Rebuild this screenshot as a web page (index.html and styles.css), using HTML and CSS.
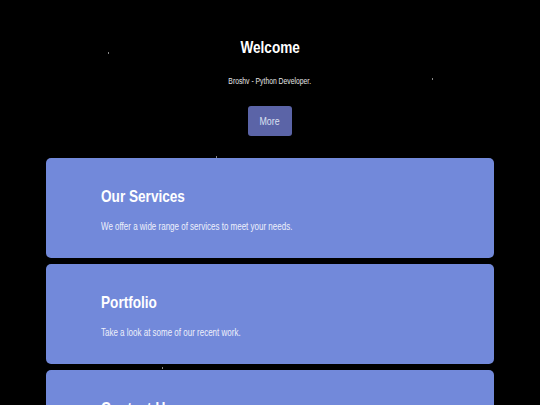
FILE: index.html
```html
<!DOCTYPE html>
<html lang="en">
<head>
	<meta charset="utf-8" />
	<title>Broshv</title>
	<meta name="viewport" content="width=device-width,initial-scale=1.0">
	<link rel="stylesheet" href="styles.css">
</head>

<body>
<span class="star" style="left:108px;top:52px"></span>
<span class="star" style="left:432px;top:78px"></span>
<span class="star" style="left:216px;top:156px"></span>
<span class="star" style="left:162px;top:367px"></span>

<header class="hero">
  <h1 class="narrow">Welcome</h1>
  <p class="narrow">Broshv - Python Developer.</p>
  <a href="#services" class="button"><span class="narrow">More</span></a>
</header>

<main class="cards">
  <section class="card" id="services">
    <h2 class="narrow">Our Services</h2>
    <p class="narrow">We offer a wide range of services to meet your needs.</p>
  </section>
  <section class="card">
    <h2 class="narrow">Portfolio</h2>
    <p class="narrow">Take a look at some of our recent work.</p>
  </section>
  <section class="card">
    <h2 class="narrow">Contact Us</h2>
    <p class="narrow">Get in touch with us today.</p>
  </section>
</main>
</body>
</html>
```

FILE: styles.css
```css
body {
  margin: 0;
  background: #000;
  color: #fff;
  font-family: "Liberation Sans", Arial, sans-serif;
  overflow: hidden;
}

/* no narrow font installed, so squeeze the text */
.narrow {
  display: inline-block;
  transform: scaleX(0.8);
}

/* little stars in the background */
.star {
  position: absolute;
  width: 1px;
  height: 2px;
  background: #888;
}

.hero {
  display: flex;
  flex-direction: column;
  align-items: center;
  padding-top: 37px;
}

.hero h1 {
  margin: 0;
  font-size: 17px;
  line-height: 22px;
  font-weight: bold;
}

.hero p {
  margin: 16px 0 0;
  font-size: 8.5px;
  line-height: 12px;
  color: #e6e6e6;
}

.button {
  margin-top: 19px;
  width: 44px;
  height: 30px;
  line-height: 30px;
  text-align: center;
  background-color: #5b64a7;
  color: #dde0f2;
  font-size: 11px;
  text-decoration: none;
  border-radius: 3px;
}

.cards {
  display: flex;
  flex-direction: column;
  gap: 6px;
  width: 448px;
  margin: 22px auto 0;
}

.card {
  box-sizing: border-box;
  height: 100px;
  padding: 29px 20px 0 55px;
  background-color: #7289da;
  border-radius: 5px;
}

.card .narrow {
  display: block;
  transform-origin: left center;
}

.card h2 {
  margin: 0;
  font-size: 17px;
  line-height: 20px;
  font-weight: bold;
}

.card p {
  margin: 13px 0 0;
  font-size: 10px;
  line-height: 14px;
  color: #eef0fa;
}
```
